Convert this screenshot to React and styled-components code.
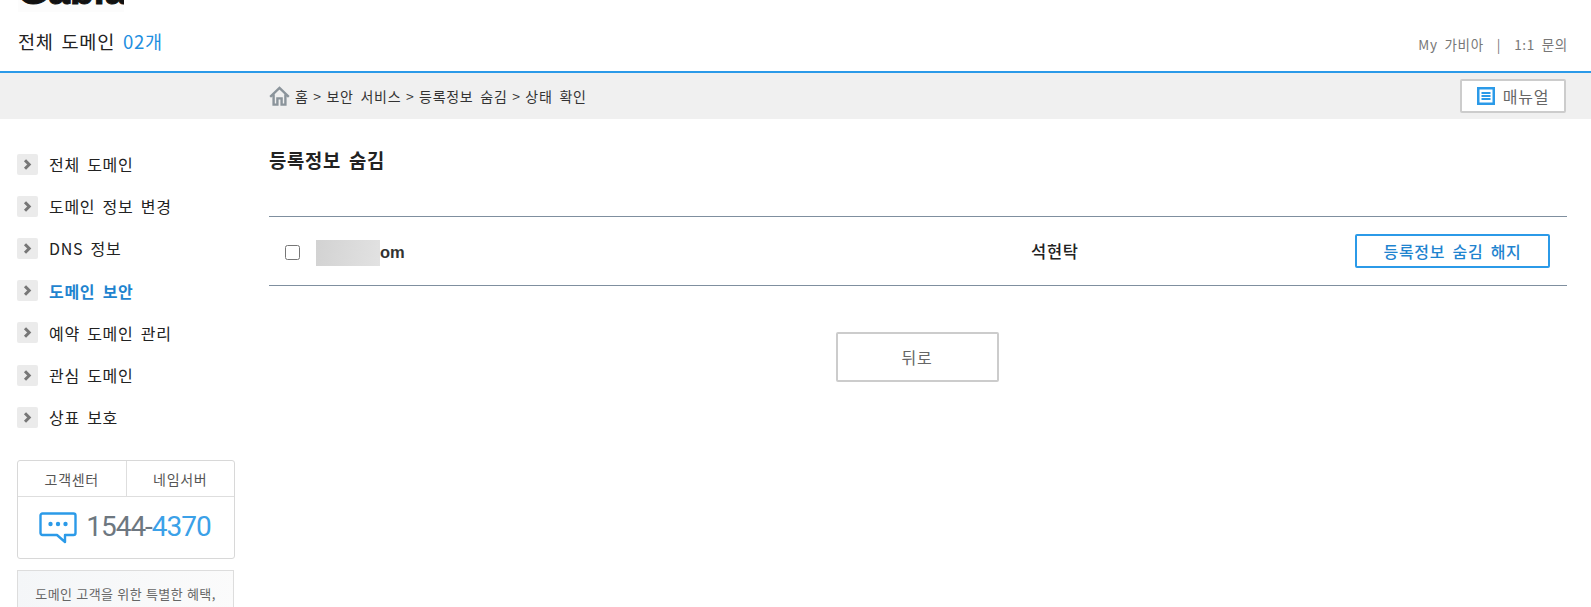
import React from 'react';
import styled, { createGlobalStyle } from 'styled-components';

const FONT = '"Noto Sans CJK KR", "Noto Sans", sans-serif';

const menu = [
  { label: '전체 도메인' },
  { label: '도메인 정보 변경' },
  { label: 'DNS 정보' },
  { label: '도메인 보안', active: true },
  { label: '예약 도메인 관리' },
  { label: '관심 도메인' },
  { label: '상표 보호' },
];

const crumbs = ['홈', '보안 서비스', '등록정보 숨김', '상태 확인'];

const App = () => {
  return (
    <Page>
      <GlobalStyle />
      <Header>
        <LogoClip>
          <Logo>Gabia</Logo>
        </LogoClip>
        <HeaderRow>
          <HeaderTitle>
            전체 도메인 <Count>02개</Count>
          </HeaderTitle>
          <UserLinks>
            <span>My 가비아</span>
            <Divider>|</Divider>
            <span>1:1 문의</span>
          </UserLinks>
        </HeaderRow>
      </Header>
      <CrumbBar>
        <Crumbs>
          <HomeIcon width="21" height="20" viewBox="0 0 21 20">
            <path d="M1.2 10.8 L10.5 2 L19.8 10.8 M4.6 8.5 V18.6 H8.4 V12.4 H12.6 V18.6 H16.4 V8.5" fill="none" stroke="#8b949b" strokeWidth="2.4" />
          </HomeIcon>
          <CrumbText>
            {crumbs.map((crumb, i) => (
              <React.Fragment key={crumb}>
                {i > 0 && <CrumbSep> &gt; </CrumbSep>}
                {crumb}
              </React.Fragment>
            ))}
          </CrumbText>
        </Crumbs>
        <ManualButton>
          <svg width="18" height="18" viewBox="0 0 18 18">
            <rect width="18" height="18" fill="#2b9ae8" />
            <rect x="2.5" y="2.5" width="13" height="13" fill="#fff" />
            <path d="M4.5 6 H13.5 M4.5 9 H13.5 M4.5 12 H13.5" stroke="#2b9ae8" strokeWidth="2" />
          </svg>
          매뉴얼
        </ManualButton>
      </CrumbBar>
      <Body>
        <Sidebar>
          <Menu>
            {menu.map((item) => (
              <MenuItem key={item.label} $active={item.active}>
                <Arrow>
                  <svg width="9" height="11" viewBox="0 0 9 11">
                    <path d="M2 1.2 L6.2 5.5 L2 9.8" fill="none" stroke="#777" strokeWidth="3" />
                  </svg>
                </Arrow>
                {item.label}
              </MenuItem>
            ))}
          </Menu>
          <SupportCard>
            <SupportTabs>
              <SupportTab>고객센터</SupportTab>
              <SupportTab>네임서버</SupportTab>
            </SupportTabs>
            <Phone>
              <svg width="38" height="32" viewBox="0 0 38 32">
                <path d="M3.5 1.5 H34.5 A2 2 0 0 1 36.5 3.5 V21 A2 2 0 0 1 34.5 23 H26 V30 L18 23 H3.5 A2 2 0 0 1 1.5 21 V3.5 A2 2 0 0 1 3.5 1.5 Z" fill="none" stroke="#2b9ae8" strokeWidth="2.4" strokeLinejoin="round" />
                <circle cx="11.5" cy="12" r="2.2" fill="#2b9ae8" />
                <circle cx="19" cy="12" r="2.2" fill="#2b9ae8" />
                <circle cx="26.5" cy="12" r="2.2" fill="#2b9ae8" />
              </svg>
              <PhoneNumber>
                1544-<PhoneBlue>4370</PhoneBlue>
              </PhoneNumber>
            </Phone>
          </SupportCard>
          <PromoCard>도메인 고객을 위한 특별한 혜택,</PromoCard>
        </Sidebar>
        <Main>
          <PageTitle>등록정보 숨김</PageTitle>
          <DomainRow>
            <DomainCell>
              <Check type="checkbox" />
              <Domain>
                <Blur />
                om
              </Domain>
            </DomainCell>
            <Owner>석현탁</Owner>
            <ReleaseButton>등록정보 숨김 해지</ReleaseButton>
          </DomainRow>
          <Actions>
            <BackButton>뒤로</BackButton>
          </Actions>
        </Main>
      </Body>
    </Page>
  );
};

const GlobalStyle = createGlobalStyle`
  html, body {
    margin: 0;
    padding: 0;
    background: #fff;
    overflow: hidden;
  }
  body {
    font-family: ${FONT};
    letter-spacing: 0.044em;
    word-spacing: 0.19em;
  }
  button {
    letter-spacing: inherit;
    word-spacing: inherit;
  }
`;

const Page = styled.div`
  width: 1591px;
  height: 607px;
  overflow: hidden;
`;

const Header = styled.header`
  height: 71px;
  border-bottom: 2px solid #2b9ae8;
  padding: 0 23px 0 18px;
`;

const LogoClip = styled.div`
  width: 106px;
  height: 12px;
  overflow: hidden;
  background: #fcfcfc;
`;

const Logo = styled.div`
  font-family: "Liberation Sans", sans-serif;
  font-weight: 700;
  font-size: 39px;
  line-height: 40px;
  letter-spacing: 0;
  color: #111;
  margin-top: -29px;
  -webkit-text-stroke: 1px #111;
`;

const HeaderRow = styled.div`
  display: flex;
  justify-content: space-between;
  align-items: center;
  padding-top: 14px;
  height: 30px;
`;

const HeaderTitle = styled.div`
  font-size: 18.6px;
  line-height: 30px;
  color: #222;
`;

const Count = styled.span`
  color: #1f8fdf;
`;

const UserLinks = styled.div`
  font-size: 13.5px;
  color: #777;
  padding-top: 5px;
`;

const Divider = styled.span`
  margin: 0 13px;
`;

const CrumbBar = styled.div`
  height: 46px;
  background: #f0f0f0;
  display: flex;
  justify-content: space-between;
  align-items: center;
  padding: 0 24px 0 269px;
`;

const Crumbs = styled.div`
  display: flex;
  align-items: center;
  gap: 5px;
  font-size: 14px;
  line-height: 20px;
  color: #333;
  margin-top: -1px;
`;

const CrumbText = styled.span`
  white-space: pre;
`;

const CrumbSep = styled.span`
  word-spacing: 0.06em;
`;

const HomeIcon = styled.svg`
  display: block;
  margin-top: 1px;
`;

const ManualButton = styled.button`
  width: 106px;
  height: 34px;
  margin-right: 1px;
  background: #fff;
  border: 2px solid #ccc;
  border-radius: 2px;
  display: flex;
  align-items: center;
  justify-content: center;
  gap: 8px;
  font-family: ${FONT};
  font-size: 16px;
  color: #666;
  padding: 0;
`;

const Body = styled.div`
  display: flex;
`;

const Sidebar = styled.aside`
  width: 218px;
  margin-left: 17px;
  padding-top: 24px;
`;

const Menu = styled.ul`
  list-style: none;
  margin: 0;
  padding: 0;
`;

const MenuItem = styled.li`
  display: flex;
  align-items: center;
  gap: 11px;
  height: 42.2px;
  font-size: 16px;
  font-weight: ${(p) => (p.$active ? 700 : 400)};
  color: ${(p) => (p.$active ? '#1f84cf' : '#222')};
`;

const Arrow = styled.span`
  width: 21px;
  height: 21px;
  background: #ebebeb;
  border-radius: 2px;
  display: flex;
  align-items: center;
  justify-content: center;
`;

const SupportCard = styled.div`
  width: 216px;
  height: 97px;
  margin-top: 22px;
  border: 1px solid #d8d8d8;
  border-radius: 3px;
`;

const SupportTabs = styled.div`
  display: flex;
  height: 35px;
  border-bottom: 1px solid #dedede;
`;

const SupportTab = styled.div`
  flex: 1;
  display: flex;
  align-items: center;
  justify-content: center;
  font-size: 14px;
  color: #555;

  & + & {
    border-left: 1px solid #dedede;
  }
`;

const Phone = styled.div`
  display: flex;
  align-items: center;
  justify-content: center;
  gap: 9px;
  height: 61px;
  padding-right: 2px;
`;

const PhoneNumber = styled.div`
  font-family: "Roboto", sans-serif;
  font-weight: 400;
  font-size: 28px;
  line-height: 32px;
  letter-spacing: -1px;
  color: #6d7780;
  margin-top: -2px;
`;

const PhoneBlue = styled.span`
  color: #3ba1e8;
`;

const PromoCard = styled.div`
  width: 217px;
  height: 60px;
  margin-top: 11px;
  border: 1px solid #ddd;
  background: linear-gradient(100deg, #f4f6f8, #fbfbfb);
  box-sizing: border-box;
  padding-top: 13px;
  text-align: center;
  font-size: 13px;
  letter-spacing: 0.03em;
  word-spacing: 0.05em;
  color: #666;
`;

const Main = styled.main`
  width: 1298px;
  margin-left: 34px;
`;

const PageTitle = styled.h2`
  margin: 0;
  padding-top: 29px;
  font-size: 18.8px;
  line-height: 24px;
  font-weight: 700;
  color: #222;
`;

const DomainRow = styled.div`
  margin-top: 44px;
  height: 68px;
  border-top: 1px solid #7f8f9f;
  border-bottom: 1px solid #7f8f9f;
  display: grid;
  grid-template-columns: 762px 1fr auto;
  align-items: center;
  padding-right: 17px;
`;

const DomainCell = styled.div`
  display: flex;
  align-items: center;
  padding: 3px 0 0 16px;
`;

const Check = styled.input`
  width: 15px;
  height: 15px;
  margin: 0 16px 0 0;
`;

const Domain = styled.div`
  display: flex;
  align-items: center;
  font-family: "Liberation Sans", sans-serif;
  font-size: 16.5px;
  font-weight: 700;
  letter-spacing: 0;
  color: #333;
`;

const Blur = styled.span`
  width: 64px;
  height: 26px;
  background: linear-gradient(100deg, #d2d2d2, #e2e2e2);
`;

const Owner = styled.div`
  font-size: 16.5px;
  font-weight: 500;
  color: #222;
`;

const ReleaseButton = styled.button`
  width: 195px;
  height: 34px;
  background: #fff;
  border: 2px solid #2b9ae8;
  border-radius: 2px;
  font-family: ${FONT};
  font-size: 16px;
  font-weight: 500;
  color: #1f84cf;
  padding: 0;
`;

const Actions = styled.div`
  display: flex;
  justify-content: center;
  margin-top: 46px;
  padding-right: 2px;
`;

const BackButton = styled.button`
  width: 163px;
  height: 50px;
  background: #fff;
  border: 2px solid #ccc;
  border-radius: 2px;
  font-family: ${FONT};
  font-size: 16px;
  color: #666;
  padding: 0;
`;

export default App;
